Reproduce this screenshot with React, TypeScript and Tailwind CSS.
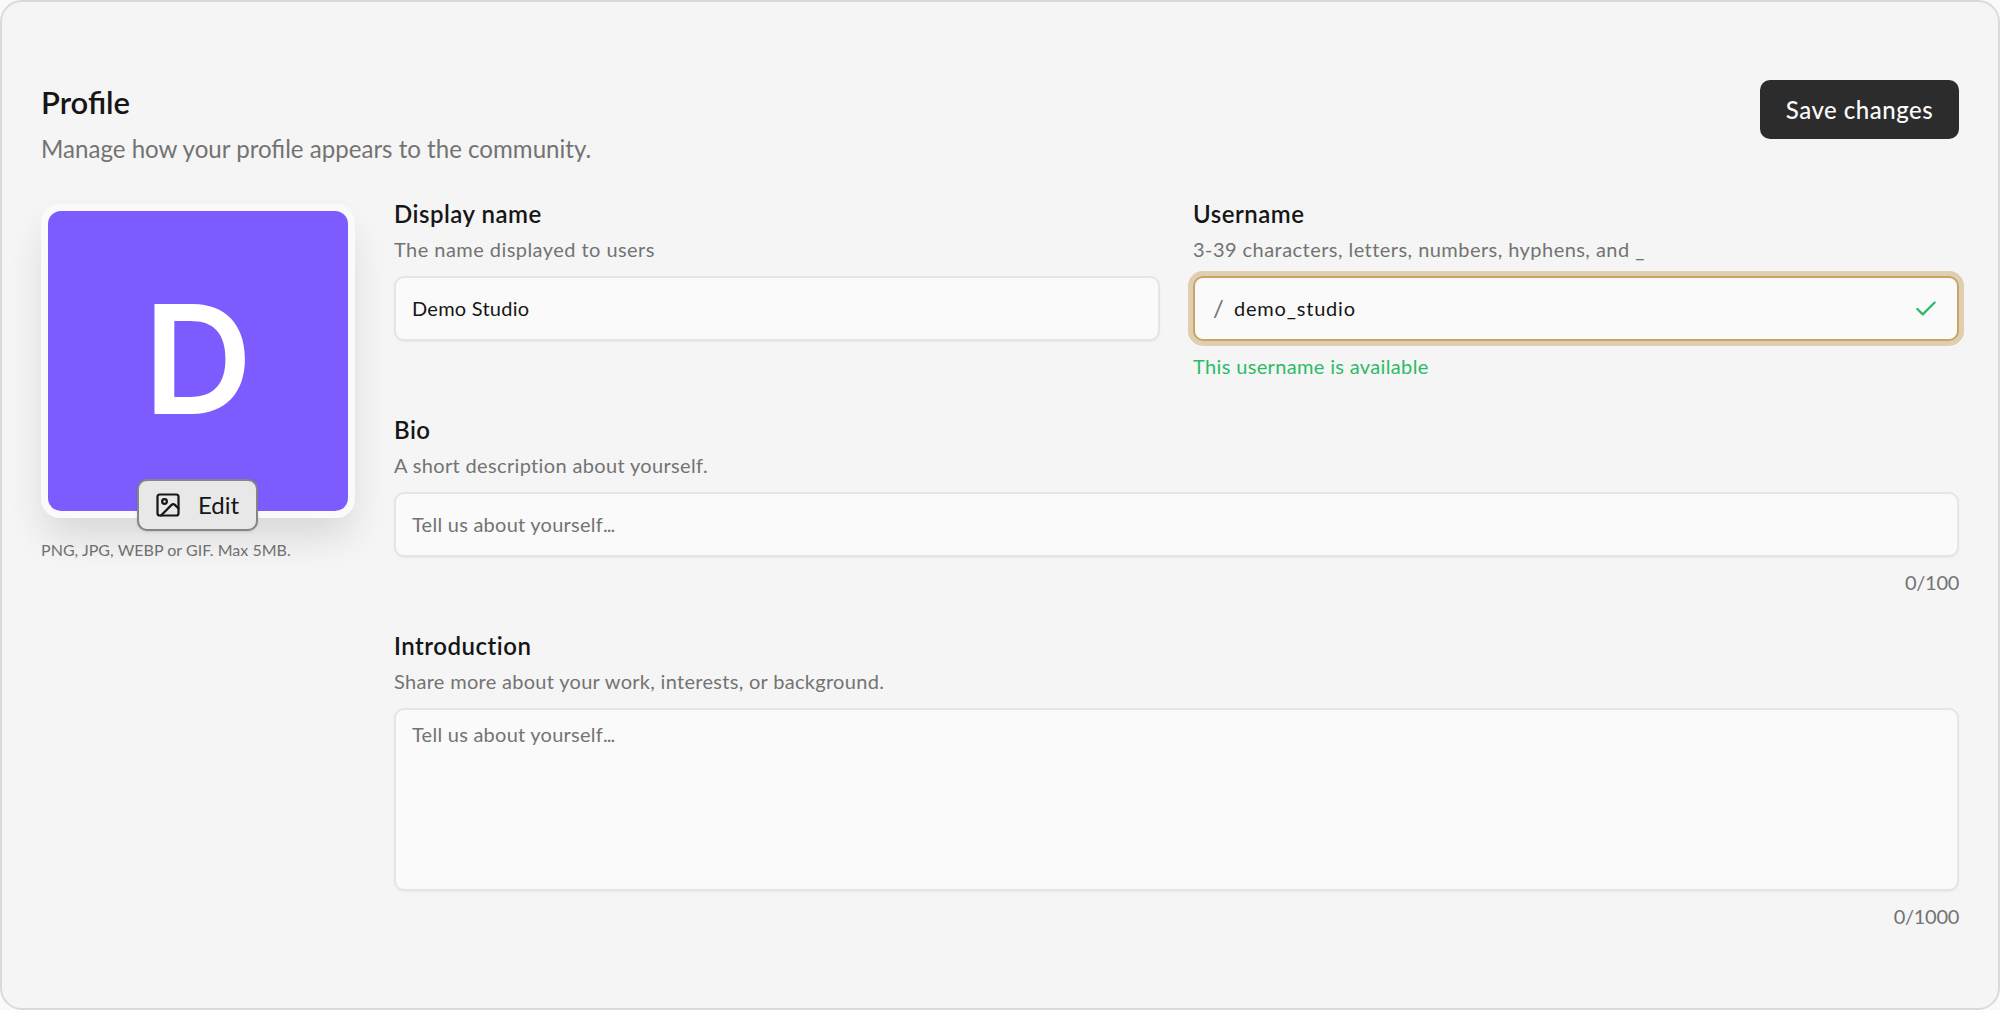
import React from 'react';
import { Check, Image as ImageIcon } from 'lucide-react';

type FieldProps = {
  label: string;
  hint: React.ReactNode;
  footer?: React.ReactNode;
  children: React.ReactNode;
};

function Field({ label, hint, footer, children }: FieldProps) {
  return (
    <div className="flex min-w-0 flex-1 flex-col">
      <label className="h-9 text-[24px] leading-9 font-semibold tracking-[0.5px] text-[#161616]">{label}</label>
      <p className="mt-1 mb-3 h-7 text-[20px] leading-[26px] text-[#737373]">{hint}</p>
      {children}
      <div className="mt-3 h-7 text-[20px] leading-[27px]">{footer}</div>
    </div>
  );
}

function Placeholder() {
  return (
    <span className="tracking-[0.25px] text-[#737373]">
      Tell us about yourself<span className="tracking-[-1px]">...</span>
    </span>
  );
}

export default function App() {
  return (
    <div className="h-[1010px] w-[2000px] bg-[#fafafa] font-['Lato','Inter',sans-serif] text-[#161616]">
      <main className="flex h-full w-full flex-col rounded-[22px] border-2 border-[#dadada] bg-[#f5f5f5] px-[39px] pt-[78px]">
        <header className="flex h-[116px] items-start justify-between">
          <div>
            <h1 className="h-11 text-[31px] leading-[44px] font-semibold">Profile</h1>
            <p className="mt-[7px] text-[24.1px] leading-9 text-[#737373]">Manage how your profile appears to the community.</p>
          </div>
          <button className="flex h-[59px] w-[199px] items-center justify-center rounded-[10px] bg-[#2c2c2c] text-[24px] font-medium tracking-[0.5px] text-[#fafafa]">
            Save changes
          </button>
        </header>

        <div className="flex gap-[39px]">
          <aside className="w-[314px] shrink-0 pt-2">
            <div className="relative flex h-[314px] w-[314px] items-center justify-center rounded-[19px] border-[7px] border-[#fafafa] bg-[#fafafa] shadow-[0_22px_38px_-4px_rgba(0,0,0,0.12)]">
              <div className="flex h-full w-full items-center justify-center rounded-[13px] bg-[#7c5cff]">
                <span className="pb-[4px] font-['Inter',sans-serif] text-[151px] leading-none font-semibold text-white">D</span>
              </div>
              <button className="absolute top-[268px] left-[89px] flex h-[52px] w-[121px] items-center gap-[16px] rounded-[10px] border-2 border-[#858585] bg-[#e8e8e8] pl-[15px] text-[24px] text-[#161616] shadow-sm">
                <ImageIcon size={28} strokeWidth={1.9} />
                Edit
              </button>
            </div>
            <p className="mt-5 text-[16px] leading-6 tracking-[0.03px] text-[#737373]">PNG, JPG, WEBP or GIF. Max 5MB.</p>
          </aside>

          <form className="flex min-w-0 flex-1 flex-col gap-[31px]">
            <div className="flex gap-[33px]">
              <Field label="Display name" hint={<span className="tracking-[0.45px]">The name displayed to users</span>}>
                <div className="flex h-[65px] items-center rounded-[10px] border-2 border-[#e5e5e5] bg-[#fafafa] px-4 pb-[2px] text-[20px] tracking-[0.25px] shadow-xs">
                  Demo Studio
                </div>
              </Field>
              <Field
                label="Username"
                hint={<span className="tracking-[0.45px]">3-39 characters, letters, numbers, hyphens, and _</span>}
                footer={<span className="tracking-[0.35px] text-[#2bbb66]">This username is available</span>}
              >
                <div className="flex h-[65px] items-center rounded-[10px] border-2 border-[#c8a566] bg-[#fafafa] px-[18px] text-[20px] shadow-[0_0_0_5px_#dfcfb0]">
                  <span className="w-[21px] pb-[2px] text-[24px] leading-7 text-[#737373]">/</span>
                  <span className="flex-1 pb-[2px] tracking-[0.8px]">demo_studio</span>
                  <Check size={26} strokeWidth={2.1} className="text-[#2bbb66]" />
                </div>
              </Field>
            </div>

            <Field
              label="Bio"
              hint={<span className="tracking-[0.35px]">A short description about yourself.</span>}
              footer={<p className="text-right tracking-[-0.3px] text-[#737373]">0/100</p>}
            >
              <div className="flex h-[65px] items-center rounded-[10px] border-2 border-[#e5e5e5] bg-[#fafafa] px-4 pb-[2px] text-[20px] shadow-xs">
                <Placeholder />
              </div>
            </Field>

            <Field
              label="Introduction"
              hint={<span className="tracking-[0.3px]">Share more about your work, interests, or background.</span>}
              footer={<p className="text-right tracking-[-0.3px] text-[#737373]">0/1000</p>}
            >
              <div className="h-[183px] rounded-[10px] border-2 border-[#e5e5e5] bg-[#fafafa] px-4 pt-[10px] text-[20px] leading-7 shadow-xs">
                <Placeholder />
              </div>
            </Field>
          </form>
        </div>
      </main>
    </div>
  );
}
